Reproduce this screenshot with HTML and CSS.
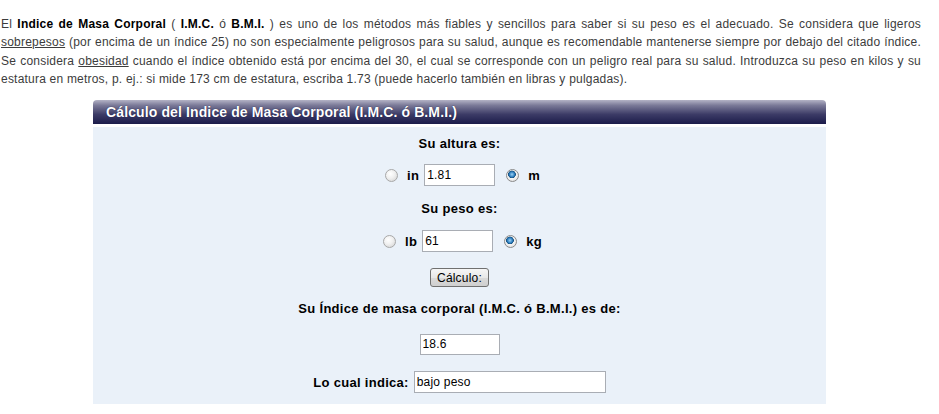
FILE: index.html
```html
<!DOCTYPE html>
<html lang="es">
<head>
<meta charset="utf-8">
<title>Cálculo del Indice de Masa Corporal</title>
<link rel="stylesheet" href="styles.css">
</head>
<body>
<div class="page">
  <p class="intro">El <b>Indice de Masa Corporal</b> ( <b>I.M.C.</b> ó <b>B.M.I.</b> ) es uno de los métodos más fiables y sencillos para saber si su peso es el adecuado. Se considera que ligeros <span class="ul">sobrepesos</span> (por encima de un índice 25) no son especialmente peligrosos para su salud, aunque es recomendable mantenerse siempre por debajo del citado índice. Se considera <span class="ul">obesidad</span> cuando el índice obtenido está por encima del 30, el cual se corresponde con un peligro real para su salud. Introduzca su peso en kilos y su estatura en metros, p. ej.: si mide 173 cm de estatura, escriba 1.73 (puede hacerlo también en libras y pulgadas).</p>

  <div class="panel">
    <div class="panel-head">Cálculo del Indice de Masa Corporal (I.M.C. ó B.M.I.)</div>
    <div class="panel-body">
      <div class="label lbl-altura">Su altura es:</div>
      <div class="row row-units row-altura">
        <input type="radio" name="h" class="radio">
        <span class="unit">in</span>
        <input type="text" class="field field-short" value="1.81">
        <input type="radio" name="h" class="radio" checked>
        <span class="unit">m</span>
      </div>
      <div class="label lbl-peso">Su peso es:</div>
      <div class="row row-units row-peso">
        <input type="radio" name="w" class="radio">
        <span class="unit">lb</span>
        <input type="text" class="field field-short" value="61">
        <input type="radio" name="w" class="radio" checked>
        <span class="unit">kg</span>
      </div>
      <div class="row row-btn"><button class="btn">Cálculo:</button></div>
      <div class="label lbl-result">Su Índice de masa corporal (I.M.C. ó B.M.I.) es de:</div>
      <div class="row row-result"><input type="text" class="field field-result" value="18.6"></div>
      <div class="row row-indica">
        <span class="unit">Lo cual indica:</span>
        <input type="text" class="field field-long" value="bajo peso">
      </div>
    </div>
  </div>
</div>
</body>
</html>
```

FILE: styles.css
```css
html, body {
  margin: 0;
  padding: 0;
  background: #ffffff;
}

.page {
  width: 921px;
  font-family: "Liberation Sans", Arial, sans-serif;
}

.intro {
  margin: 0;
  padding: 15px 0 0 1px;
  font-size: 12px;
  line-height: 18.3px;
  letter-spacing: 0.21px;
  color: #3c3c3c;
  text-align: justify;
}

.intro b {
  color: #000;
}

.intro .ul {
  text-decoration: underline;
}

.panel {
  width: 733px;
  margin: 12px 0 0 93px;
}

.panel-head {
  height: 24px;
  line-height: 24px;
  padding-left: 13px;
  border-radius: 4px 4px 0 0;
  background: linear-gradient(to bottom, #b4b3c6 0%, #7b7a98 22%, #3c3b66 60%, #1b1b4a 100%);
  color: #ffffff;
  font-size: 14px;
  font-weight: bold;
  letter-spacing: 0.12px;
  text-shadow: 0 0 1px #10103a;
}

.panel-body {
  margin-top: 3px;
  background: #eaf1f9;
  padding: 9px 0 11px;
  display: flex;
  flex-direction: column;
  align-items: center;
}

.label {
  font-size: 13px;
  font-weight: bold;
  letter-spacing: 0.3px;
  color: #000;
  height: 16px;
  line-height: 16px;
}

.row {
  display: flex;
  align-items: center;
  justify-content: center;
}

.row-units { padding-left: 6px; }
.row-altura { margin-top: 12px; height: 22px; }
.lbl-peso { margin-top: 15px; }
.row-peso { margin-top: 13px; height: 22px; }
.row-btn { margin-top: 16px; height: 19px; }
.lbl-result { margin-top: 14px; }
.row-result { margin-top: 16px; height: 22px; }
.row-indica { margin-top: 16px; height: 22px; }

.unit {
  font-size: 13px;
  font-weight: bold;
  letter-spacing: 0.3px;
  color: #000;
}

.radio {
  appearance: none;
  -webkit-appearance: none;
  width: 13px;
  height: 13px;
  margin: 0 9px 0 0;
  border-radius: 50%;
  border: 1px solid #a8a8a8;
  background: radial-gradient(circle at 40% 35%, #ffffff 0%, #f0f0f0 45%, #cfcfcf 100%);
  box-sizing: border-box;
}

.radio:checked {
  border-color: #8a8a8a;
  background: radial-gradient(circle at 45% 40%, #9bd3f5 0%, #2f7fc0 28%, #14507f 40%, #f4f4f4 46%, #d6d6d6 100%);
}

.row .unit + .field {
  margin-left: 5px;
}

.row .field + .radio {
  margin-left: 11px;
}

.field {
  height: 22px;
  box-sizing: border-box;
  border: 1px solid #a9adb4;
  background: #fff;
  font-family: "Liberation Sans", Arial, sans-serif;
  font-size: 12px;
  letter-spacing: 0.2px;
  color: #000;
  padding: 0 2px;
  margin: 0;
  outline: none;
}

.field-short { width: 71px; }
.field-result { width: 80px; height: 21px; }
.field-long { width: 192px; margin-left: 4px; }

.btn {
  height: 19px;
  width: 59px;
  padding: 0;
  font-family: "Liberation Sans", Arial, sans-serif;
  font-size: 12px;
  letter-spacing: 0.2px;
  color: #000;
  border: 1px solid #707070;
  border-radius: 3px;
  background: linear-gradient(to bottom, #f6f6f6 0%, #e8e8e8 50%, #dadada 51%, #cfcfcf 100%);
}
```
